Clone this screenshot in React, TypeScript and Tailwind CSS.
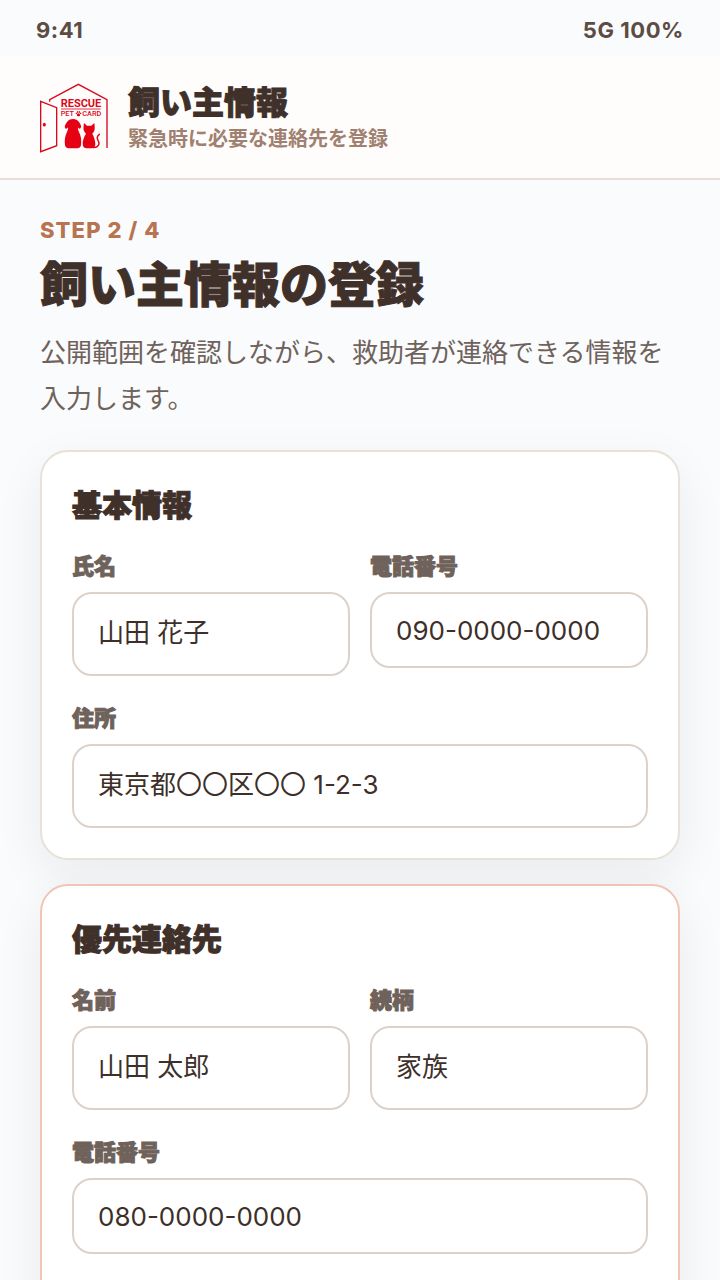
import { useId } from "react";
import clsx from "clsx";

function Logo() {
  return (
    <svg
      viewBox="30 21 216 216"
      className="size-18 shrink-0"
      role="img"
      aria-label="RESCUE PET CARD"
      fill="none"
      stroke="#d9081c"
      strokeWidth="4"
    >
      <path d="M59 83V77L145 31L231 77V222" />
      <path d="M32 82L80 101V215L32 233Z" />
      <ellipse cx="43" cy="152" rx="4.5" ry="5.5" fill="#d9081c" stroke="none" />
      <path d="M93 105H212" strokeWidth="2.5" />
      <g fill="#d9081c" stroke="none" fontFamily="Roboto, sans-serif">
        <text x="92" y="100" fontSize="33" fontWeight="700">RESCUE</text>
        <text x="92" y="127" fontSize="22" fontWeight="500">PET</text>
        <text x="157" y="127" fontSize="22" fontWeight="500">CARD</text>
      </g>
      <g fill="#d9081c" stroke="none">
        <ellipse cx="139" cy="118" rx="2" ry="2.8" />
        <ellipse cx="143" cy="114" rx="2" ry="2.8" />
        <ellipse cx="148" cy="114" rx="2" ry="2.8" />
        <ellipse cx="152" cy="118" rx="2" ry="2.8" />
        <path d="M145.500 118C149 118 152 124 149.500 126C148 127 143 127 141.500 126C139 124 142 118 145.500 118Z" />
      </g>
      <g fill="#e60014" stroke="none">
        <path d="M129 135C137 135 143 138 147 144C152 151 155 158 152 162C150 166 144 163 144 159C143 165 145 170 148 176C153 187 155 198 153 213C153 219 147 223 141 223H117C111 223 105 219 105 213C103 198 105 187 110 176C113 170 115 165 114 159C113 164 107 166 105 162C103 158 106 151 111 144C115 138 121 135 129 135Z" />
        <path d="M162 147L171 155H184L193 147C194 157 195 164 193 170C191 175 188 177 187 179C192 188 196 200 196 210C196 219 190 223 184 223H170C163 223 158 218 158 210C158 199 162 188 168 179C164 175 162 172 161 168C160 162 161 154 162 147Z" />
      </g>
      <path
        d="M186 220C199 222 208 216 207 207C206 200 200 196 202 189C203 185 206 184 208 181"
        stroke="#e60014"
        strokeWidth="4.500"
        strokeLinecap="round"
      />
    </svg>
  );
}

type FieldProps = {
  label: string;
  value: string;
  type?: "text" | "tel";
  wide?: boolean;
};

function Field({ label, value, type = "text", wide = false }: FieldProps) {
  const id = useId();
  return (
    <div className={clsx("flex min-w-0 flex-col gap-2.5", wide && "col-span-2")}>
      <label
        htmlFor={id}
        className="text-[22px] leading-8 font-extrabold text-[#6f625b] [-webkit-text-stroke:1px_currentColor]"
      >
        {label}
      </label>
      <input
        id={id}
        type={type}
        defaultValue={value}
        className={clsx(
          "w-full rounded-[20px] border-2 border-[#ddd2ca] bg-white px-6 text-[26px] text-[#3d2f29] outline-none focus:border-[#b87350]",
          type === "tel" ? "h-19 py-5" : "h-21 pt-4 pb-6",
        )}
      />
    </div>
  );
}

type CardProps = { title: string; accent?: boolean; children: React.ReactNode };

function Card({ title, accent = false, children }: CardProps) {
  return (
    <section
      className={clsx(
        "rounded-[28px] border-2 bg-white px-[30px] pt-[30px] shadow-[0_16px_48px_rgba(30,30,30,0.07)]",
        accent ? "border-[#efc5b5] pb-24" : "border-[#e9e0d7] pb-[30px]",
      )}
    >
      <h3 className="mb-[22px] text-[30px] leading-[46px] font-black [-webkit-text-stroke:1px_currentColor]">
        {title}
      </h3>
      <div className="grid grid-cols-2 items-start gap-x-5 gap-y-[26px]">{children}</div>
    </section>
  );
}

export default function App() {
  return (
    <div
      lang="ja"
      className="min-h-screen bg-[#f9fbfd] font-['Inter','Noto_Sans_CJK_JP',sans-serif] text-[#3f302a]"
    >
      <div className="flex h-14 items-center justify-between px-9 pt-1 text-[22px] font-bold tracking-wide text-[#5c4c44]">
        <span>9:41</span>
        <span>5G 100%</span>
      </div>
      <header className="flex items-center gap-4 border-b-2 border-[#e9dfd8] bg-[#fffdfb] px-10 py-[23px]">
        <Logo />
        <div className="pt-1">
          <h1 className="text-[32px] leading-10 font-extrabold [-webkit-text-stroke:1px_currentColor]">
            飼い主情報
          </h1>
          <p className="text-[20px] leading-8 font-bold text-[#a08070]">緊急時に必要な連絡先を登録</p>
        </div>
      </header>
      <main className="px-10 pt-9 pb-12">
        <p className="text-[22px] leading-7 font-extrabold tracking-wider text-[#b87350]">STEP 2 / 4</p>
        <h2 className="mt-2 text-[48px] leading-[66px] font-extrabold [-webkit-text-stroke:1px_currentColor]">
          飼い主情報の登録
        </h2>
        <p className="mt-3 text-[26px] leading-[46px] text-[#6f625b]">
          公開範囲を確認しながら、救助者が連絡できる情報を入力します。
        </p>
        <form className="mt-7 flex flex-col gap-6">
          <Card title="基本情報">
            <Field label="氏名" value="山田 花子" />
            <Field label="電話番号" value="090-0000-0000" type="tel" />
            <Field label="住所" value="東京都〇〇区〇〇 1-2-3" wide />
          </Card>
          <Card title="優先連絡先" accent>
            <Field label="名前" value="山田 太郎" />
            <Field label="続柄" value="家族" />
            <Field label="電話番号" value="080-0000-0000" type="tel" wide />
          </Card>
        </form>
      </main>
    </div>
  );
}
